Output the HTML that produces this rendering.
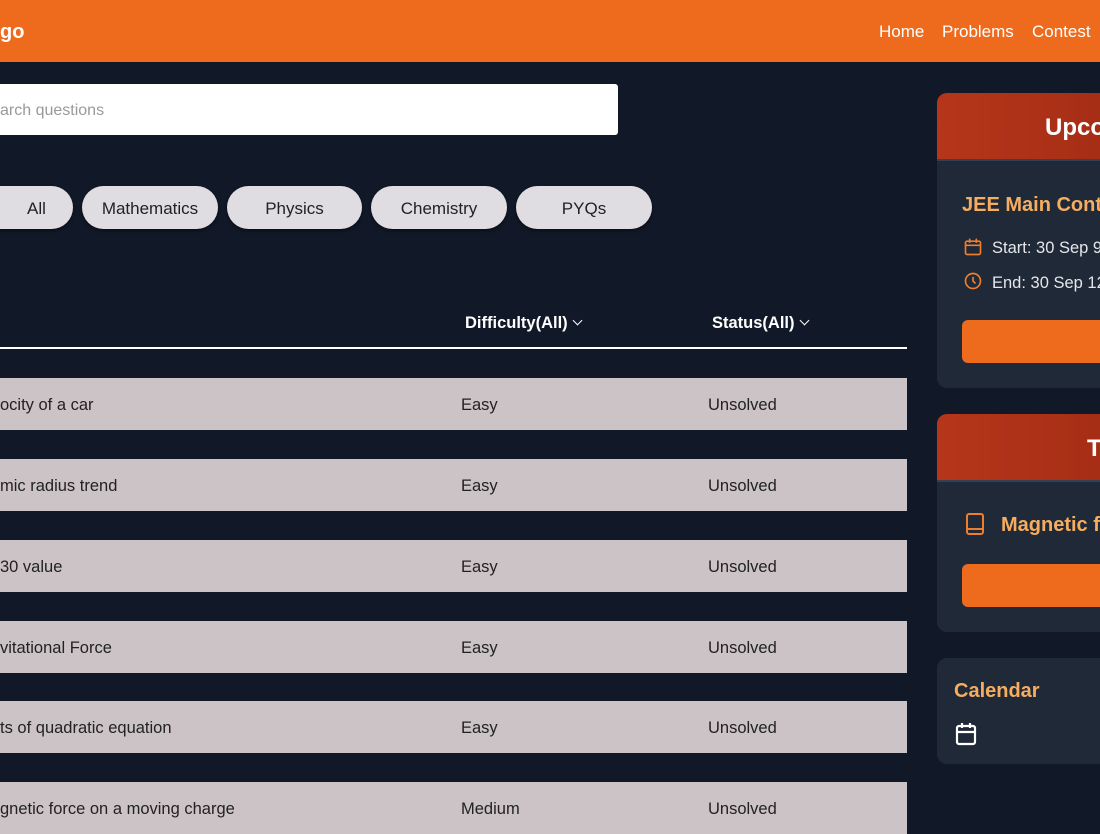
<!DOCTYPE html>
<html><head><style>
*{margin:0;padding:0;box-sizing:border-box}
body{width:1100px;height:825px;overflow:hidden;background:#111827;font-family:"Liberation Sans",sans-serif;position:relative}
.nav{position:absolute;left:0;top:0;width:1100px;height:62px;background:#ee6b1e}
.logo{position:absolute;left:0;top:21px;color:#fff;font-weight:bold;font-size:20px}
.links{position:absolute;top:22px;color:#fff;font-size:17px}
.search{position:absolute;left:-10px;top:84px;width:628px;height:51px;background:#fff;border-radius:3px;color:#9a9a9a;font-size:16px;padding:18px 0 0 10px}
.pill{position:absolute;top:186px;height:43px;background:#dfdde1;border-radius:22px;color:#222;font-size:17px;text-align:center;line-height:45px;box-shadow:0 2px 3px rgba(0,0,0,.4)}
.th{position:absolute;top:314px;color:#fff;font-weight:bold;font-size:16.5px}
.chev{display:inline-block;width:7px;height:7px;border-right:1.5px solid #fff;border-bottom:1.5px solid #fff;transform:rotate(45deg);margin:0 0 4px 6px}
.line{position:absolute;left:0;top:347px;width:907px;height:2px;background:#fff}
.row{position:absolute;left:0;width:907px;height:52px;background:#cbc3c6;color:#222;font-size:16.5px}
.row span{position:absolute;top:18px}
.card{position:absolute;left:937px;width:200px;background:#1f2937;border-radius:10px;overflow:hidden}
.ch{height:68px;background:linear-gradient(90deg,#b5361a,#a32c14);border-bottom:2px solid #334155;color:#fff;font-weight:bold;font-size:24px;padding:21px 0 0 108px}
.or{color:#f6ad5f}
.btn{position:absolute;left:25px;width:200px;height:43px;background:#ee6b1e;border-radius:6px}
.ic{position:absolute}
.meta{position:absolute;left:55px;color:#e5e7eb;font-size:16.5px;white-space:nowrap}
</style></head><body>
<div class="nav"><div class="logo">go</div>
<div class="links" style="left:879px">Home</div><div class="links" style="left:942px">Problems</div><div class="links" style="left:1032px">Contest</div></div>
<div class="search">arch questions</div>
<div class="pill" style="left:-40px;width:113px;padding-left:40px">All</div>
<div class="pill" style="left:82px;width:136px">Mathematics</div>
<div class="pill" style="left:227px;width:135px">Physics</div>
<div class="pill" style="left:371px;width:136px">Chemistry</div>
<div class="pill" style="left:516px;width:136px">PYQs</div>
<div class="th" style="left:465px">Difficulty(All)<span class="chev"></span></div>
<div class="th" style="left:712px">Status(All)<span class="chev"></span></div>
<div class="line"></div>
<div class="row" style="top:378px"><span style="left:0">ocity of a car</span><span style="left:461px">Easy</span><span style="left:708px">Unsolved</span></div>
<div class="row" style="top:459px"><span style="left:0">mic radius trend</span><span style="left:461px">Easy</span><span style="left:708px">Unsolved</span></div>
<div class="row" style="top:540px"><span style="left:0">30 value</span><span style="left:461px">Easy</span><span style="left:708px">Unsolved</span></div>
<div class="row" style="top:621px"><span style="left:0">vitational Force</span><span style="left:461px">Easy</span><span style="left:708px">Unsolved</span></div>
<div class="row" style="top:701px"><span style="left:0">ts of quadratic equation</span><span style="left:461px">Easy</span><span style="left:708px">Unsolved</span></div>
<div class="row" style="top:782px"><span style="left:0">gnetic force on a moving charge</span><span style="left:461px">Medium</span><span style="left:708px">Unsolved</span></div>

<div class="card" style="top:93px;height:295px">
<div class="ch">Upcoming</div>
<div class="or" style="position:absolute;left:25px;top:101px;font-size:20px;font-weight:bold;white-space:nowrap">JEE Main Contest</div>
<svg class="ic" style="left:26px;top:144px" width="20" height="20" viewBox="0 0 24 24" fill="none" stroke="#ee7d2e" stroke-width="2"><rect x="3" y="5" width="18" height="16" rx="2"/><path d="M3 10h18M8 2v5M16 2v5"/></svg>
<div class="meta" style="top:146px">Start: 30 Sep 9</div>
<svg class="ic" style="left:26px;top:178px" width="20" height="20" viewBox="0 0 24 24" fill="none" stroke="#ee7d2e" stroke-width="2"><circle cx="12" cy="12" r="9"/><path d="M12 7v5l3 3"/></svg>
<div class="meta" style="top:181px">End: 30 Sep 12</div>
<div class="btn" style="top:227px"></div>
</div>
<div class="card" style="top:414px;height:218px">
<div class="ch" style="padding-left:150px">To</div>
<svg class="ic" style="left:27px;top:98px" width="22" height="24" viewBox="0 0 22 24" fill="none" stroke="#ee7d2e" stroke-width="2"><rect x="3" y="2" width="16" height="20" rx="2"/><path d="M3 17h16"/></svg>
<div class="or" style="position:absolute;left:64px;top:100px;font-size:20px;font-weight:bold">Magnetic f</div>
<div class="btn" style="top:150px"></div>
</div>
<div class="card" style="top:658px;height:106px">
<div class="or" style="position:absolute;left:17px;top:22px;font-size:20px;font-weight:bold">Calendar</div>
<svg class="ic" style="left:18px;top:64px" width="22" height="24" viewBox="0 0 22 24" fill="none" stroke="#fff" stroke-width="2.2"><rect x="2" y="4" width="18" height="18" rx="2"/><path d="M2 10h18M7 1v5M15 1v5"/></svg>
</div>
</body></html>
